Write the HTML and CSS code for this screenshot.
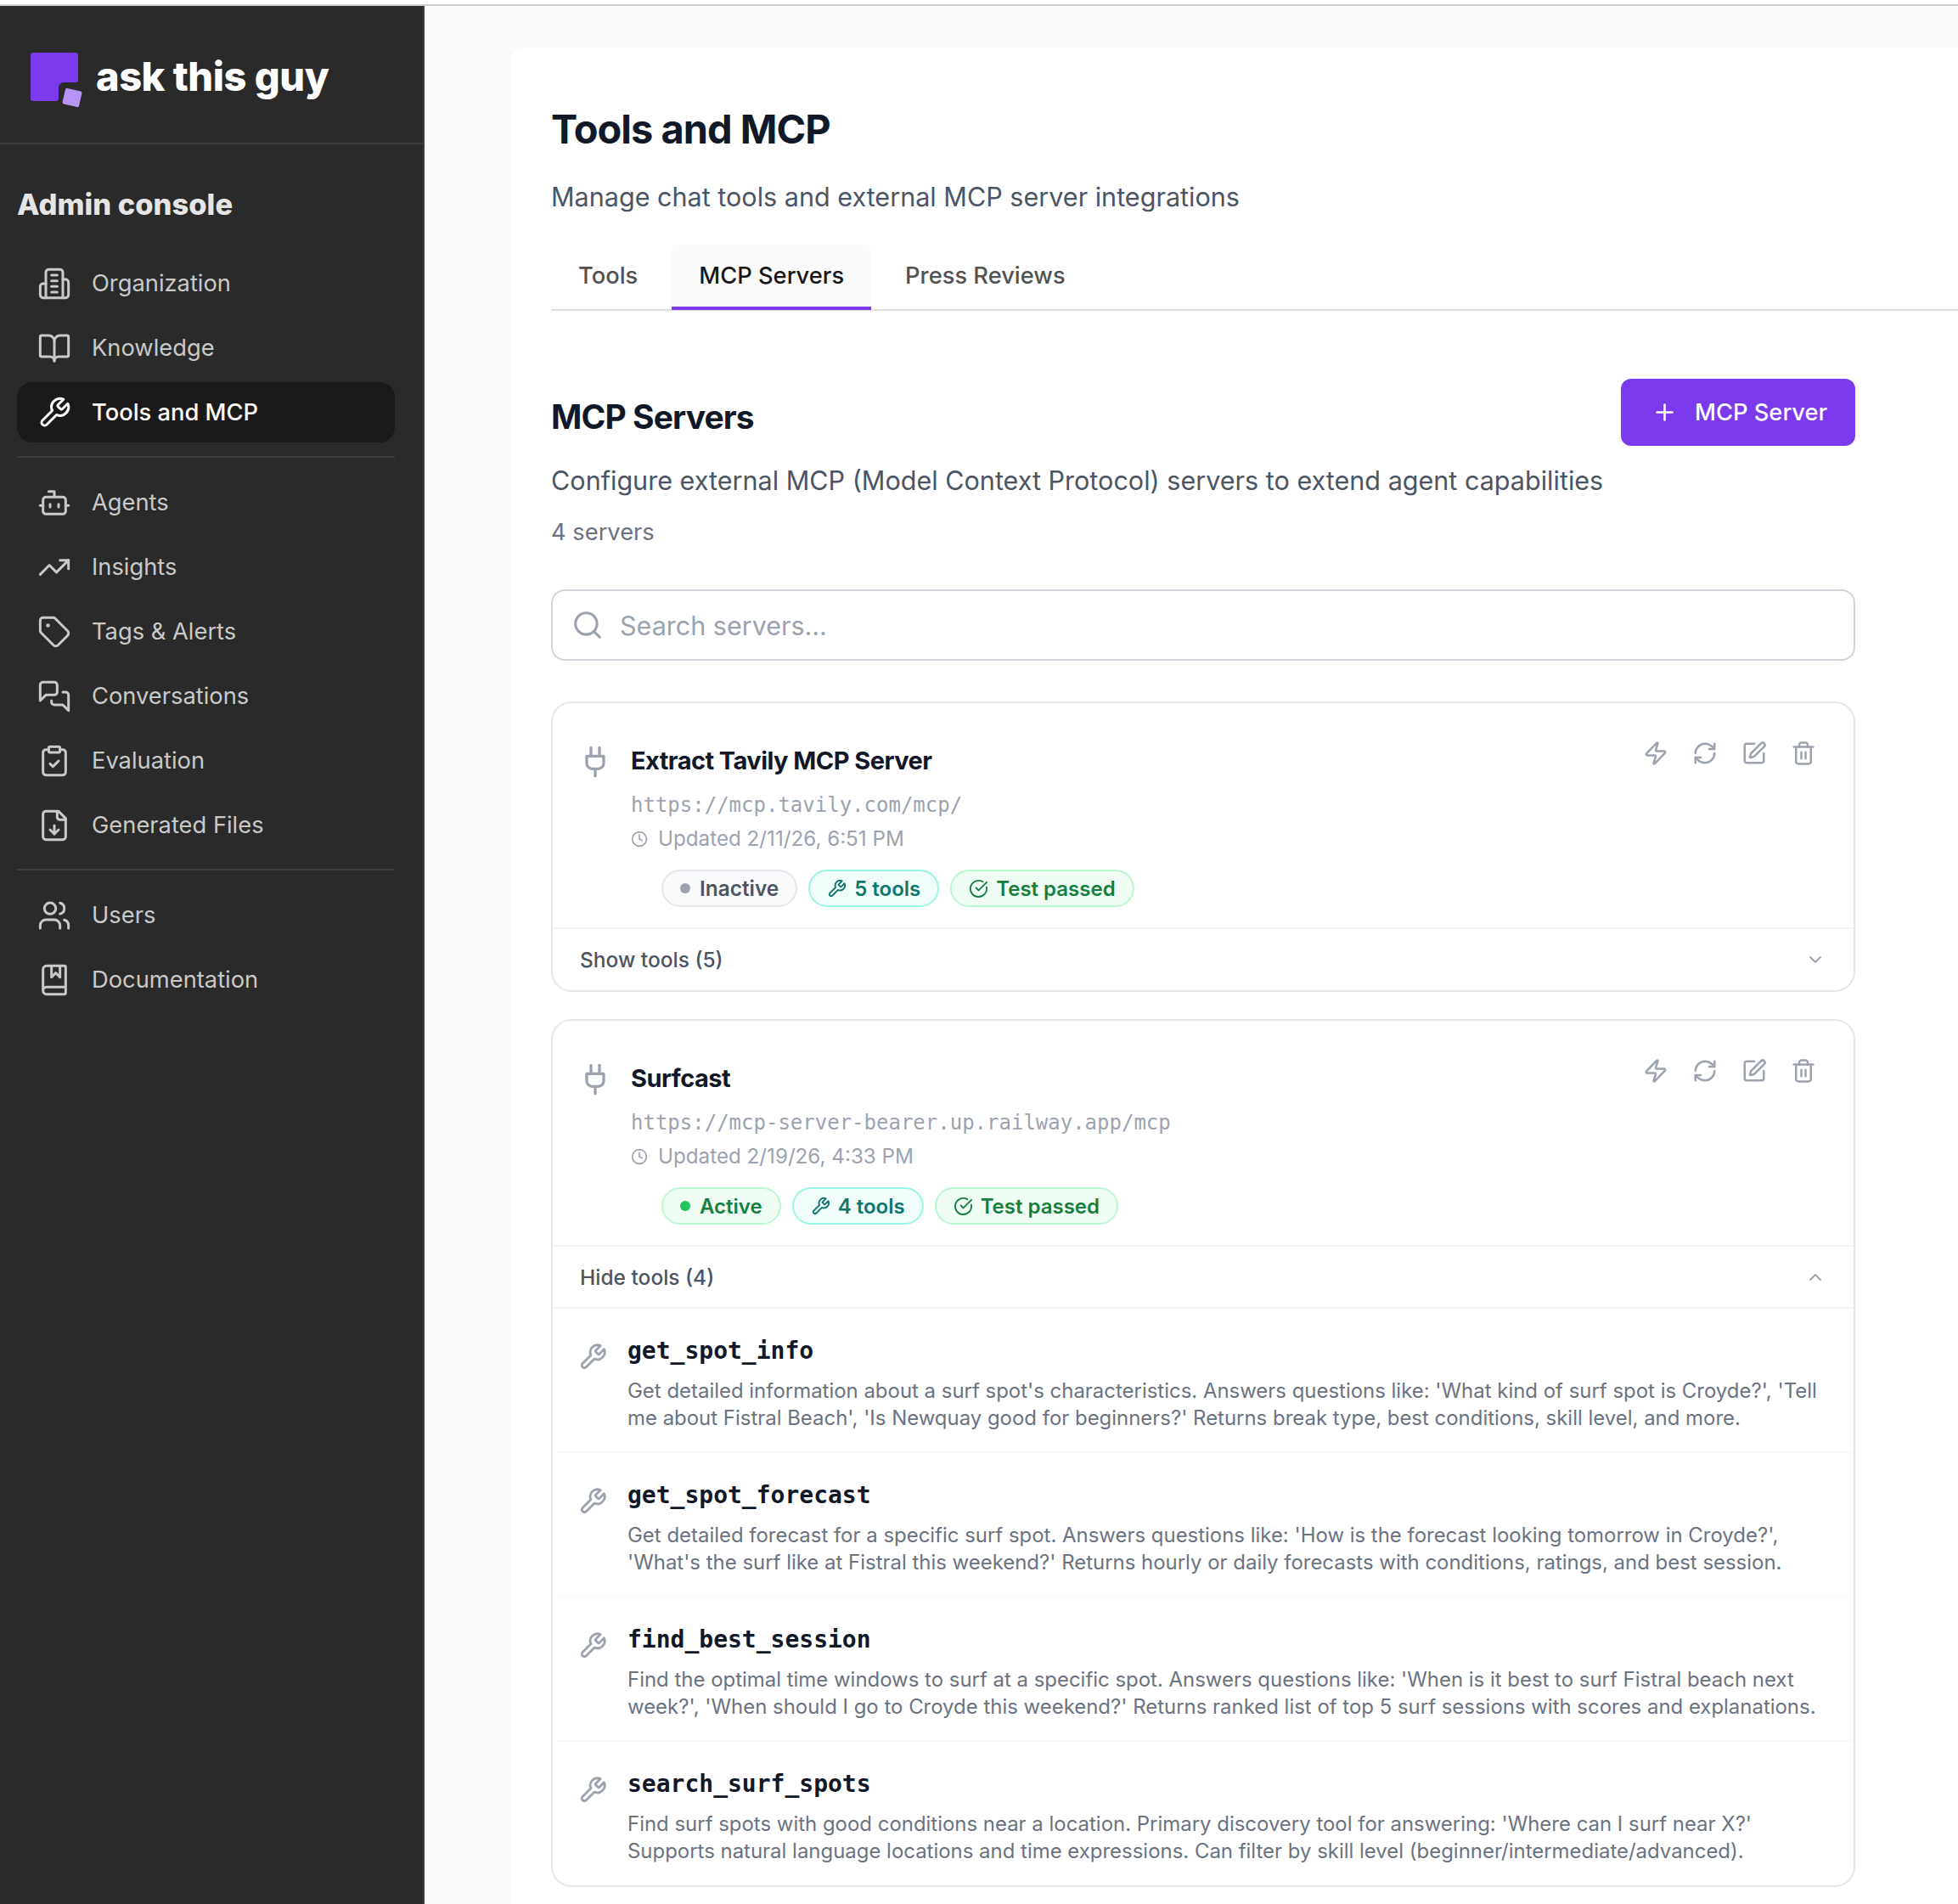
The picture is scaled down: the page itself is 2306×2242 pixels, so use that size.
FILE: index.html
```html
<!DOCTYPE html>
<html lang="en">
<head>
    <meta charset="UTF-8">
    <title>Tools and MCP</title>
    <link rel="stylesheet" href="styles.css">
</head>
<body>
    <svg class="sprite" xmlns="http://www.w3.org/2000/svg">
        <symbol id="i-org" viewBox="0 0 24 24"><path d="M6 22V4a2 2 0 0 1 2-2h8a2 2 0 0 1 2 2v18Z"/><path d="M6 12H4a2 2 0 0 0-2 2v6a2 2 0 0 0 2 2h2"/><path d="M18 9h2a2 2 0 0 1 2 2v9a2 2 0 0 1-2 2h-2"/><path d="M10 6h4"/><path d="M10 10h4"/><path d="M10 14h4"/><path d="M10 18h4"/></symbol>
        <symbol id="i-book" viewBox="0 0 24 24"><path d="M12 7v14"/><path d="M3 18a1 1 0 0 1-1-1V4a1 1 0 0 1 1-1h5a4 4 0 0 1 4 4 4 4 0 0 1 4-4h5a1 1 0 0 1 1 1v13a1 1 0 0 1-1 1h-6a3 3 0 0 0-3 3 3 3 0 0 0-3-3z"/></symbol>
        <symbol id="i-wrench" viewBox="0 0 24 24"><path d="M14.7 6.3a1 1 0 0 0 0 1.4l1.6 1.6a1 1 0 0 0 1.4 0l3.77-3.77a6 6 0 0 1-7.94 7.94l-6.91 6.91a2.12 2.12 0 0 1-3-3l6.91-6.91a6 6 0 0 1 7.94-7.94l-3.76 3.76z"/></symbol>
        <symbol id="i-bot" viewBox="0 0 24 24"><path d="M12 8V4H8"/><rect width="16" height="12" x="4" y="8" rx="2"/><path d="M2 14h2"/><path d="M20 14h2"/><path d="M15 13v2"/><path d="M9 13v2"/></symbol>
        <symbol id="i-trend" viewBox="0 0 24 24"><polyline points="22 7 13.5 15.5 8.5 10.5 2 17"/><polyline points="16 7 22 7 22 13"/></symbol>
        <symbol id="i-tag" viewBox="0 0 24 24"><path d="M12.586 2.586A2 2 0 0 0 11.172 2H4a2 2 0 0 0-2 2v7.172a2 2 0 0 0 .586 1.414l8.704 8.704a2.426 2.426 0 0 0 3.42 0l6.58-6.58a2.426 2.426 0 0 0 0-3.42z"/><circle cx="7.5" cy="7.5" r=".5" fill="currentColor"/></symbol>
        <symbol id="i-chat" viewBox="0 0 24 24"><path d="M14 9a2 2 0 0 1-2 2H6l-4 4V4a2 2 0 0 1 2-2h8a2 2 0 0 1 2 2z"/><path d="M18 9h2a2 2 0 0 1 2 2v11l-4-4h-6a2 2 0 0 1-2-2v-1"/></symbol>
        <symbol id="i-eval" viewBox="0 0 24 24"><rect width="8" height="4" x="8" y="2" rx="1"/><path d="M16 4h2a2 2 0 0 1 2 2v14a2 2 0 0 1-2 2H6a2 2 0 0 1-2-2V6a2 2 0 0 1 2-2h2"/><path d="m9 14 2 2 4-4"/></symbol>
        <symbol id="i-file" viewBox="0 0 24 24"><path d="M15 2H6a2 2 0 0 0-2 2v16a2 2 0 0 0 2 2h12a2 2 0 0 0 2-2V7Z"/><path d="M14 2v4a2 2 0 0 0 2 2h4"/><path d="M12 18v-6"/><path d="m9 15 3 3 3-3"/></symbol>
        <symbol id="i-users" viewBox="0 0 24 24"><path d="M16 21v-2a4 4 0 0 0-4-4H6a4 4 0 0 0-4 4v2"/><circle cx="9" cy="7" r="4"/><path d="M22 21v-2a4 4 0 0 0-3-3.87"/><path d="M16 3.13a4 4 0 0 1 0 7.75"/></symbol>
        <symbol id="i-docs" viewBox="0 0 24 24"><path d="M10 2v8l3-3 3 3V2"/><path d="M4 19.5v-15A2.5 2.5 0 0 1 6.5 2H19a1 1 0 0 1 1 1v18a1 1 0 0 1-1 1H6.5a1 1 0 0 1 0-5H20"/></symbol>
        <symbol id="i-plus" viewBox="0 0 24 24"><path d="M5 12h14"/><path d="M12 5v14"/></symbol>
        <symbol id="i-search" viewBox="0 0 24 24"><circle cx="11" cy="11" r="8"/><path d="m21 21-4.3-4.3"/></symbol>
        <symbol id="i-plug" viewBox="0 0 24 24"><path d="M12 22v-5"/><path d="M9 8V2"/><path d="M15 8V2"/><path d="M18 8v5a4 4 0 0 1-4 4h-4a4 4 0 0 1-4-4V8Z"/></symbol>
        <symbol id="i-clock" viewBox="0 0 24 24"><circle cx="12" cy="12" r="10"/><polyline points="12 6 12 12 16 14"/></symbol>
        <symbol id="i-check" viewBox="0 0 24 24"><path d="M21.801 10A10 10 0 1 1 17 3.335"/><path d="m9 11 3 3L22 4"/></symbol>
        <symbol id="i-zap" viewBox="0 0 24 24"><path d="M4 14a1 1 0 0 1-.78-1.63l9.9-10.2a.5.5 0 0 1 .86.46l-1.92 6.02A1 1 0 0 0 13 10h7a1 1 0 0 1 .78 1.63l-9.9 10.2a.5.5 0 0 1-.86-.46l1.92-6.02A1 1 0 0 0 11 14z"/></symbol>
        <symbol id="i-refresh" viewBox="0 0 24 24"><path d="M3 12a9 9 0 0 1 9-9 9.75 9.75 0 0 1 6.74 2.74L21 8"/><path d="M21 3v5h-5"/><path d="M21 12a9 9 0 0 1-9 9 9.75 9.75 0 0 1-6.74-2.74L3 16"/><path d="M8 16H3v5"/></symbol>
        <symbol id="i-pen" viewBox="0 0 24 24"><path d="M12 3H5a2 2 0 0 0-2 2v14a2 2 0 0 0 2 2h14a2 2 0 0 0 2-2v-7"/><path d="M18.375 2.625a1 1 0 0 1 3 3l-9.013 9.014a2 2 0 0 1-.853.505l-2.873.84a.5.5 0 0 1-.62-.62l.84-2.873a2 2 0 0 1 .506-.852z"/></symbol>
        <symbol id="i-trash" viewBox="0 0 24 24"><path d="M3 6h18"/><path d="M19 6v14c0 1-1 2-2 2H7c-1 0-2-1-2-2V6"/><path d="M8 6V4c0-1 1-2 2-2h4c1 0 2 1 2 2v2"/><path d="M10 11v6"/><path d="M14 11v6"/></symbol>
        <symbol id="i-down" viewBox="0 0 24 24"><path d="m6 9 6 6 6-6"/></symbol>
        <symbol id="i-up" viewBox="0 0 24 24"><path d="m18 15-6-6-6 6"/></symbol>
    </svg>

    <div class="topline"></div>
    <div class="page">
        <aside class="sidebar">
            <div class="brand">
                <svg class="brand-mark" viewBox="0 0 61 65">
                    <path d="M3 0h50a3 3 0 0 1 3 3v29a3 3 0 0 1-3 3H39a6 6 0 0 0-6 6v13a3 3 0 0 1-3 3H3a3 3 0 0 1-3-3V3a3 3 0 0 1 3-3z" fill="#7c3aed"/>
                    <rect x="39" y="43.500" width="20" height="19" rx="2" fill="#b794f6" transform="rotate(13 49 53)"/>
                </svg>
                <span class="brand-name">ask this guy</span>
            </div>
            <h2 class="console-title">Admin console</h2>
            <nav class="nav">
                <a class="nav-item"><svg class="icon"><use href="#i-org"/></svg>Organization</a>
                <a class="nav-item"><svg class="icon"><use href="#i-book"/></svg>Knowledge</a>
                <a class="nav-item active"><svg class="icon"><use href="#i-wrench"/></svg>Tools and MCP</a>
                <div class="nav-sep"></div>
                <a class="nav-item"><svg class="icon"><use href="#i-bot"/></svg>Agents</a>
                <a class="nav-item"><svg class="icon"><use href="#i-trend"/></svg>Insights</a>
                <a class="nav-item"><svg class="icon"><use href="#i-tag"/></svg>Tags &amp; Alerts</a>
                <a class="nav-item"><svg class="icon"><use href="#i-chat"/></svg>Conversations</a>
                <a class="nav-item"><svg class="icon"><use href="#i-eval"/></svg>Evaluation</a>
                <a class="nav-item"><svg class="icon"><use href="#i-file"/></svg>Generated Files</a>
                <div class="nav-sep"></div>
                <a class="nav-item"><svg class="icon"><use href="#i-users"/></svg>Users</a>
                <a class="nav-item"><svg class="icon"><use href="#i-docs"/></svg>Documentation</a>
            </nav>
        </aside>

        <main class="main">
            <div class="panel">
                <h1 class="page-title">Tools and MCP</h1>
                <p class="page-sub">Manage chat tools and external MCP server integrations</p>

                <div class="tabs">
                    <a class="tab">Tools</a>
                    <a class="tab active">MCP Servers</a>
                    <a class="tab">Press Reviews</a>
                </div>

                <div class="section-head">
                    <h2 class="section-title">MCP Servers</h2>
                    <button class="add-btn"><svg class="icon"><use href="#i-plus"/></svg>MCP Server</button>
                </div>
                <p class="section-desc">Configure external MCP (Model Context Protocol) servers to extend agent capabilities</p>
                <p class="server-count">4 servers</p>

                <div class="search">
                    <svg class="icon"><use href="#i-search"/></svg>
                    <span>Search servers...</span>
                </div>

                <section class="server">
                    <div class="server-main">
                        <svg class="icon plug"><use href="#i-plug"/></svg>
                        <div class="server-info">
                            <h3 class="server-name">Extract Tavily MCP Server</h3>
                            <div class="server-url">https://mcp.tavily.com/mcp/</div>
                            <div class="server-updated"><svg class="icon"><use href="#i-clock"/></svg>Updated 2/11/26, 6:51 PM</div>
                        </div>
                        <div class="server-actions">
                            <svg class="icon"><use href="#i-zap"/></svg>
                            <svg class="icon"><use href="#i-refresh"/></svg>
                            <svg class="icon"><use href="#i-pen"/></svg>
                            <svg class="icon"><use href="#i-trash"/></svg>
                        </div>
                    </div>
                    <div class="badges">
                        <span class="badge gray"><i class="dot"></i>Inactive</span>
                        <span class="badge teal"><svg class="icon"><use href="#i-wrench"/></svg>5 tools</span>
                        <span class="badge green"><svg class="icon"><use href="#i-check"/></svg>Test passed</span>
                    </div>
                    <div class="toggle">Show tools (5)<svg class="icon"><use href="#i-down"/></svg></div>
                </section>

                <section class="server">
                    <div class="server-main">
                        <svg class="icon plug"><use href="#i-plug"/></svg>
                        <div class="server-info">
                            <h3 class="server-name">Surfcast</h3>
                            <div class="server-url">https://mcp-server-bearer.up.railway.app/mcp</div>
                            <div class="server-updated"><svg class="icon"><use href="#i-clock"/></svg>Updated 2/19/26, 4:33 PM</div>
                        </div>
                        <div class="server-actions">
                            <svg class="icon"><use href="#i-zap"/></svg>
                            <svg class="icon"><use href="#i-refresh"/></svg>
                            <svg class="icon"><use href="#i-pen"/></svg>
                            <svg class="icon"><use href="#i-trash"/></svg>
                        </div>
                    </div>
                    <div class="badges">
                        <span class="badge green"><i class="dot"></i>Active</span>
                        <span class="badge teal"><svg class="icon"><use href="#i-wrench"/></svg>4 tools</span>
                        <span class="badge green"><svg class="icon"><use href="#i-check"/></svg>Test passed</span>
                    </div>
                    <div class="toggle open">Hide tools (4)<svg class="icon"><use href="#i-up"/></svg></div>

                    <div class="tool">
                        <svg class="icon"><use href="#i-wrench"/></svg>
                        <div>
                            <div class="tool-name">get_spot_info</div>
                            <p class="tool-desc">Get detailed information about a surf spot's characteristics. Answers questions like: 'What kind of surf spot is Croyde?', 'Tell me about Fistral Beach', 'Is Newquay good for beginners?' Returns break type, best conditions, skill level, and more.</p>
                        </div>
                    </div>
                    <div class="tool">
                        <svg class="icon"><use href="#i-wrench"/></svg>
                        <div>
                            <div class="tool-name">get_spot_forecast</div>
                            <p class="tool-desc">Get detailed forecast for a specific surf spot. Answers questions like: 'How is the forecast looking tomorrow in Croyde?', 'What's the surf like at Fistral this weekend?' Returns hourly or daily forecasts with conditions, ratings, and best session.</p>
                        </div>
                    </div>
                    <div class="tool">
                        <svg class="icon"><use href="#i-wrench"/></svg>
                        <div>
                            <div class="tool-name">find_best_session</div>
                            <p class="tool-desc">Find the optimal time windows to surf at a specific spot. Answers questions like: 'When is it best to surf Fistral beach next week?', 'When should I go to Croyde this weekend?' Returns ranked list of top 5 surf sessions with scores and explanations.</p>
                        </div>
                    </div>
                    <div class="tool">
                        <svg class="icon"><use href="#i-wrench"/></svg>
                        <div>
                            <div class="tool-name">search_surf_spots</div>
                            <p class="tool-desc">Find surf spots with good conditions near a location. Primary discovery tool for answering: 'Where can I surf near X?' Supports natural language locations and time expressions. Can filter by skill level (beginner/intermediate/advanced).</p>
                        </div>
                    </div>
                </section>
            </div>
        </main>
    </div>
</body>
</html>
```

FILE: styles.css
```css
* {
    box-sizing: border-box;
}

html, body {
    height: 2242px;
    overflow: hidden;
}

body {
    margin: 0;
    background: #ffffff;
    font-family: "Inter", "Liberation Sans", sans-serif;
    color: #111827;
}

.sprite {
    display: none;
}

.icon {
    fill: none;
    stroke: currentColor;
    stroke-width: 2;
    stroke-linecap: round;
    stroke-linejoin: round;
    flex: none;
}

.topline {
    height: 7px;
    border-bottom: 2px solid #cfcfcf;
}

.page {
    display: flex;
    height: 2235px;
}

/* sidebar */
.sidebar {
    width: 500px;
    flex: none;
    background: #2a2a2a;
    border-right: 2px solid #3d3d3d;
}

.brand {
    height: 163px;
    display: flex;
    align-items: center;
    gap: 16px;
    padding-left: 36px;
    padding-top: 14px;
    border-bottom: 2px solid #3d3d3d;
}

.brand-mark {
    width: 61px;
    height: 65px;
}

.brand-name {
    margin-top: -11px;
    font-size: 47px;
    font-weight: 800;
    color: #ffffff;
    letter-spacing: -0.5px;
}

.console-title {
    margin: 47px 0 0 20px;
    font-size: 34.5px;
    line-height: 48px;
    font-weight: 800;
    color: #e5e5e5;
}

.nav {
    margin: 33px 33px 0 20px;
}

.nav-item {
    display: flex;
    align-items: center;
    gap: 24px;
    height: 71px;
    margin-bottom: 5px;
    padding-left: 24px;
    border-radius: 18px;
    font-size: 27.3px;
    color: #c9c9c9;
}

.nav-item .icon {
    width: 40px;
    height: 40px;
    stroke-width: 1.8;
}

.nav-item.active {
    background: #1a1a1a;
    color: #ffffff;
    font-weight: 500;
}

.nav-sep {
    height: 2px;
    margin: 16px 0 17px;
    background: #3d3d3d;
}

/* main area */
.main {
    flex: 1;
    min-width: 0;
    padding: 49px 0 0 101px;
    background: #f9fafb;
}

.panel {
    height: 100%;
    padding: 60px 121px 0 48px;
    background: #ffffff;
    border-top-left-radius: 18px;
}

.page-title {
    margin: 0;
    font-size: 46.9px;
    line-height: 72px;
    font-weight: 700;
    letter-spacing: -0.95px;
    color: #111827;
}

.page-sub {
    margin: 22px 0 0;
    font-size: 30.55px;
    line-height: 44px;
    color: #4b5563;
}

.tabs {
    display: flex;
    gap: 8px;
    height: 78px;
    margin-top: 34px;
    margin-right: -121px;
    border-bottom: 2px solid #dedede;
}

.tab {
    display: flex;
    align-items: center;
    height: 77px;
    padding: 0 32px 4px;
    border-radius: 8px 8px 0 0;
    font-size: 27.3px;
    font-weight: 500;
    color: #525252;
}

.tab.active {
    background: #fafafa;
    border-bottom: 4px solid #7c3aed;
    color: #171717;
    padding-bottom: 0;
}

.section-head {
    display: flex;
    justify-content: space-between;
    align-items: center;
    height: 79px;
    margin-top: 80px;
}

.section-title {
    margin: 10px 0 0;
    font-size: 39px;
    font-weight: 700;
    letter-spacing: -0.9px;
    color: #111827;
}

.add-btn {
    display: flex;
    align-items: center;
    gap: 20px;
    width: 276px;
    height: 79px;
    padding: 0 0 0 36px;
    border: 0;
    border-radius: 12px;
    background: #7c3aed;
    color: #ffffff;
    font-family: inherit;
    font-size: 27.3px;
    font-weight: 500;
}

.add-btn .icon {
    width: 31px;
    height: 31px;
}

.section-desc {
    margin: 19px 0 0;
    font-size: 30.55px;
    line-height: 44px;
    color: #4b5563;
}

.server-count {
    margin: 20px 0 0;
    font-size: 27.3px;
    line-height: 38px;
    color: #6b7280;
}

.search {
    display: flex;
    align-items: center;
    gap: 19px;
    height: 84px;
    margin-top: 48px;
    padding-left: 22px;
    border: 2px solid #d1d5db;
    border-radius: 16px;
    font-size: 30.5px;
    color: #9ca3af;
}

.search .icon {
    width: 38px;
    height: 38px;
}

/* server cards */
.server {
    margin-top: 32px;
    border: 2px solid #e5e7eb;
    border-radius: 24px;
    background: #ffffff;
}

.search + .server {
    margin-top: 48px;
}

.server-main {
    display: flex;
    padding: 46px 44px 0 30px;
}

.plug {
    width: 40px;
    height: 40px;
    margin-top: 3px;
    color: #9ca3af;
}

.server-info {
    flex: 1;
    margin-left: 22px;
}

.server-name {
    margin: 0;
    font-size: 29px;
    line-height: 44px;
    font-weight: 700;
    letter-spacing: -0.55px;
    color: #111827;
}

.server-url {
    margin-top: 13px;
    font-family: "DejaVu Sans Mono", monospace;
    font-size: 24px;
    line-height: 34px;
    color: #9ca3af;
}

.server-updated {
    display: flex;
    align-items: center;
    gap: 12px;
    margin-top: 6px;
    font-size: 24.2px;
    line-height: 34px;
    color: #9ca3af;
}

.server-updated .icon {
    width: 20px;
    height: 20px;
}

.server-actions {
    display: flex;
    gap: 28px;
    margin-top: -2px;
    color: #9ca3af;
}

.server-actions .icon {
    width: 30px;
    height: 30px;
}

.badges {
    display: flex;
    gap: 13px;
    margin-top: 19px;
    padding-left: 128px;
}

.badge {
    display: flex;
    align-items: center;
    gap: 9px;
    height: 44px;
    padding: 0 20px;
    border: 2px solid;
    border-radius: 22px;
    font-size: 24px;
    font-weight: 600;
}

.badge .icon {
    width: 23px;
    height: 23px;
}

.badge .dot {
    width: 12px;
    height: 12px;
    margin-right: 2px;
    border-radius: 50%;
    background: currentColor;
}

.badge.gray {
    background: #f9fafb;
    border-color: #e5e7eb;
    color: #4b5563;
    font-size: 24.4px;
}

.badge.gray .dot {
    background: #9ca3af;
}

.badge.teal {
    background: #f0fdfa;
    border-color: #99f6e4;
    color: #0f766e;
}

.badge.green {
    background: #f0fdf4;
    border-color: #bbf7d0;
    color: #15803d;
}

.badge.green .dot {
    background: #22c55e;
}

.toggle {
    display: flex;
    justify-content: space-between;
    align-items: center;
    height: 74px;
    margin-top: 24px;
    padding: 0 33px 0 32px;
    border-top: 2px solid #f3f4f6;
    font-size: 24.5px;
    font-weight: 500;
    color: #4b5563;
}

.toggle .icon {
    width: 24px;
    height: 24px;
    color: #9ca3af;
}

.toggle.open {
    height: 75px;
    border-bottom: 2px solid #f3f4f6;
}

.tool {
    display: flex;
    gap: 24px;
    height: 170px;
    padding: 31px 32px 0 30px;
    border-bottom: 2px solid #f9fafb;
}

.tool:last-child {
    height: 169px;
    border-bottom: 0;
}

.tool .icon {
    width: 34px;
    height: 34px;
    margin-top: 9px;
    color: #9ca3af;
}

.tool-name {
    font-family: "DejaVu Sans Mono", monospace;
    font-size: 28px;
    line-height: 38px;
    font-weight: 700;
    color: #111827;
}

.tool-desc {
    margin: 12px 0 0;
    font-size: 23.95px;
    line-height: 32px;
    color: #6b7280;
}
```
